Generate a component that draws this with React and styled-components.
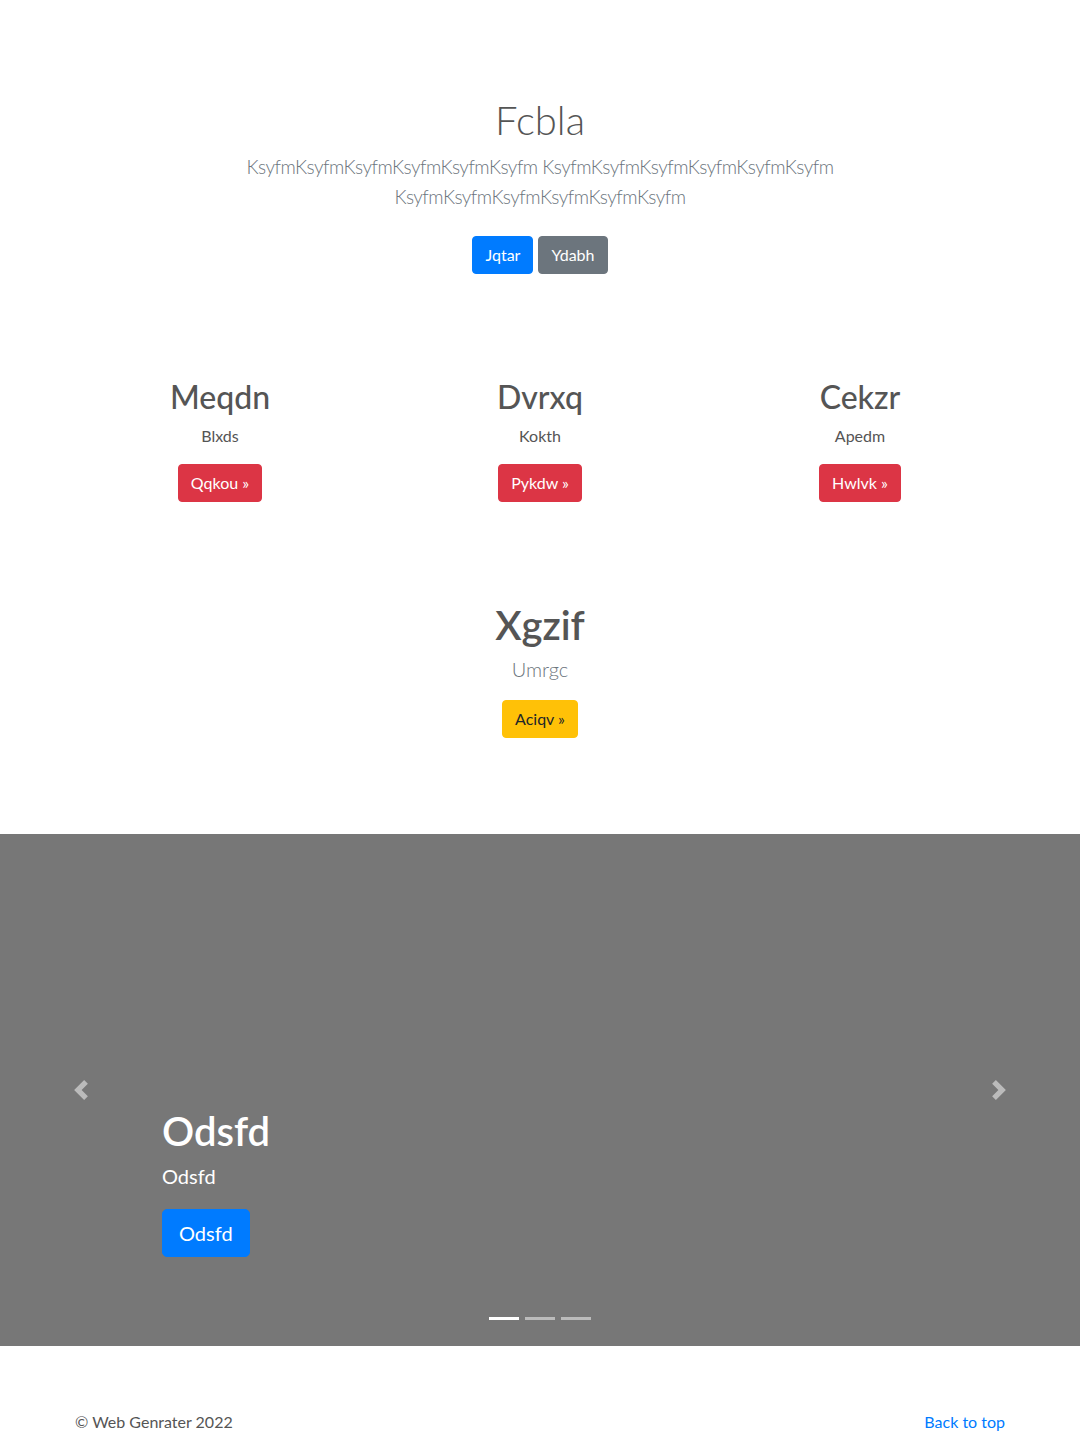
import React from "react";
import styled, { createGlobalStyle, css } from "styled-components";

const GlobalStyle = createGlobalStyle`
  *, *::before, *::after { box-sizing: border-box; }
  body {
    margin: 0;
    font-family: Lato, "Open Sans", "Liberation Sans", sans-serif;
    color: #555;
    background: #fff;
    font-size: 16px;
    line-height: 1.5;
  }
`;

const variants = {
  primary: css`background: #007bff; border-color: #007bff; color: #fff;`,
  secondary: css`background: #6c757d; border-color: #6c757d; color: #fff;`,
  danger: css`background: #dc3545; border-color: #dc3545; color: #fff;`,
  warning: css`background: #ffc107; border-color: #ffc107; color: #212529;`,
};

const Button = styled.a`
  display: inline-block;
  font-family: inherit;
  font-weight: 400;
  font-size: ${(p) => (p.$lg ? "20px" : "16px")};
  line-height: 1.5;
  padding: ${(p) => (p.$lg ? "8px 16px" : "6px 12px")};
  border: 1px solid transparent;
  border-radius: ${(p) => (p.$lg ? "5px" : "4px")};
  text-decoration: none;
  cursor: pointer;
  ${(p) => variants[p.$variant]}
`;

const Hero = styled.section`
  text-align: center;
  padding: 96px 15px 48px;
`;

const HeroInner = styled.div`
  max-width: 700px;
  margin: 0 auto;
`;

const HeroTitle = styled.h1`
  font-size: 40px;
  font-weight: 300;
  line-height: 1.2;
  margin: 0 0 8px;
  color: #555;
`;

const Lead = styled.p`
  font-size: 20px;
  font-weight: 300;
  line-height: 1.5;
  color: #6c757d;
  margin: 0 0 ${(p) => p.$mb || 16}px;
`;

const HeroLead = styled(Lead)`
  font-size: 19px;
  line-height: 30px;
  letter-spacing: -0.5px;
`;

const ButtonRow = styled.div`
  display: flex;
  justify-content: center;
  gap: 5px;
  margin: ${(p) => p.$m || "0 0 24px"};
`;

const Container = styled.div`
  width: 960px;
  margin: 0 auto;
  padding: 0 15px;
`;

const Marketing = styled(Container)`
  padding-top: 32px;
`;

const Row = styled.div`
  display: grid;
  grid-template-columns: repeat(3, 1fr);
  margin: 0 -15px;
`;

const Col = styled.div`
  padding: 0 15px;
  text-align: center;
`;

const ColTitle = styled.h2`
  font-size: 32px;
  font-weight: 500;
  line-height: 1.2;
  margin: 0 0 8px;
  color: #555;
`;

const Text = styled.p`
  margin: 0 0 16px;
  font-size: 16px;
`;

const Feature = styled.section`
  text-align: center;
  padding: 83px 15px 96px;
`;

const FeatureTitle = styled.h2`
  font-size: 40px;
  font-weight: 600;
  line-height: 1.2;
  margin: 0 0 5px;
  color: #555;
`;

const Carousel = styled.section`
  position: relative;
  height: 512px;
  background: #777;
  display: flex;
  align-items: flex-end;
  padding: 0 15% 89px;
`;

const Caption = styled.div`
  color: #fff;
  text-align: left;
`;

const CaptionTitle = styled.h1`
  font-size: 40px;
  font-weight: 600;
  line-height: 1.2;
  margin: 0 0 6px;
`;

const CaptionText = styled.p`
  font-size: 20px;
  line-height: 1.5;
  margin: 0 0 18px;
`;

const Control = styled.a`
  position: absolute;
  top: 0;
  bottom: 0;
  ${(p) => (p.$side === "prev" ? "left: 0;" : "right: 0;")}
  width: 15%;
  display: flex;
  align-items: center;
  justify-content: center;
  opacity: 0.5;
`;

const Indicators = styled.ol`
  position: absolute;
  left: 0;
  right: 0;
  bottom: 26px;
  display: flex;
  justify-content: center;
  gap: 6px;
  list-style: none;
  margin: 0;
  padding: 0;
`;

const Indicator = styled.li`
  width: 30px;
  height: 3px;
  background: ${(p) => (p.$active ? "#fff" : "rgba(255,255,255,0.5)")};
`;

const Footer = styled(Container)`
  margin-top: 64px;
  display: flex;
  justify-content: space-between;
  font-size: 16px;
  line-height: 1.5;
`;

const FooterText = styled.p`
  margin: 0 0 16px;
`;

const Link = styled.a`
  color: #007bff;
  text-decoration: none;
`;

const ChevronLeft = () => (
  <svg width="20" height="20" viewBox="0 0 8 8" fill="#fff">
    <path d="M5.25 0l-4 4 4 4 1.5-1.5L4.25 4l2.5-2.5L5.25 0z" />
  </svg>
);

const ChevronRight = () => (
  <svg width="20" height="20" viewBox="0 0 8 8" fill="#fff">
    <path d="M2.75 0l-1.5 1.5L3.75 4l-2.5 2.5L2.75 8l4-4-4-4z" />
  </svg>
);

const cols = [
  { title: "Meqdn", text: "Blxds", btn: "Qqkou" },
  { title: "Dvrxq", text: "Kokth", btn: "Pykdw" },
  { title: "Cekzr", text: "Apedm", btn: "Hwlvk" },
];

export default function App() {
  return (
    <>
      <GlobalStyle />
      <Hero>
        <HeroInner>
          <HeroTitle>Fcbla</HeroTitle>
          <HeroLead $mb={24}>
            KsyfmKsyfmKsyfmKsyfmKsyfmKsyfm KsyfmKsyfmKsyfmKsyfmKsyfmKsyfm KsyfmKsyfmKsyfmKsyfmKsyfmKsyfm
          </HeroLead>
          <ButtonRow>
            <Button $variant="primary">Jqtar</Button>
            <Button $variant="secondary">Ydabh</Button>
          </ButtonRow>
        </HeroInner>
      </Hero>

      <Marketing>
        <Row>
          {cols.map((c) => (
            <Col key={c.title}>
              <ColTitle>{c.title}</ColTitle>
              <Text>{c.text}</Text>
              <ButtonRow $m="0 0 16px">
                <Button $variant="danger">{c.btn} »</Button>
              </ButtonRow>
            </Col>
          ))}
        </Row>
      </Marketing>

      <Feature>
        <FeatureTitle>Xgzif</FeatureTitle>
        <Lead $mb={16}>Umrgc</Lead>
        <ButtonRow $m="0">
          <Button $variant="warning">Aciqv »</Button>
        </ButtonRow>
      </Feature>

      <Carousel>
        <Indicators>
          <Indicator $active />
          <Indicator />
          <Indicator />
        </Indicators>
        <Caption>
          <CaptionTitle>Odsfd</CaptionTitle>
          <CaptionText>Odsfd</CaptionText>
          <Button $variant="primary" $lg>Odsfd</Button>
        </Caption>
        <Control $side="prev"><ChevronLeft /></Control>
        <Control $side="next"><ChevronRight /></Control>
      </Carousel>

      <Footer>
        <FooterText>© Web Genrater 2022</FooterText>
        <FooterText><Link href="#">Back to top</Link></FooterText>
      </Footer>
    </>
  );
}
